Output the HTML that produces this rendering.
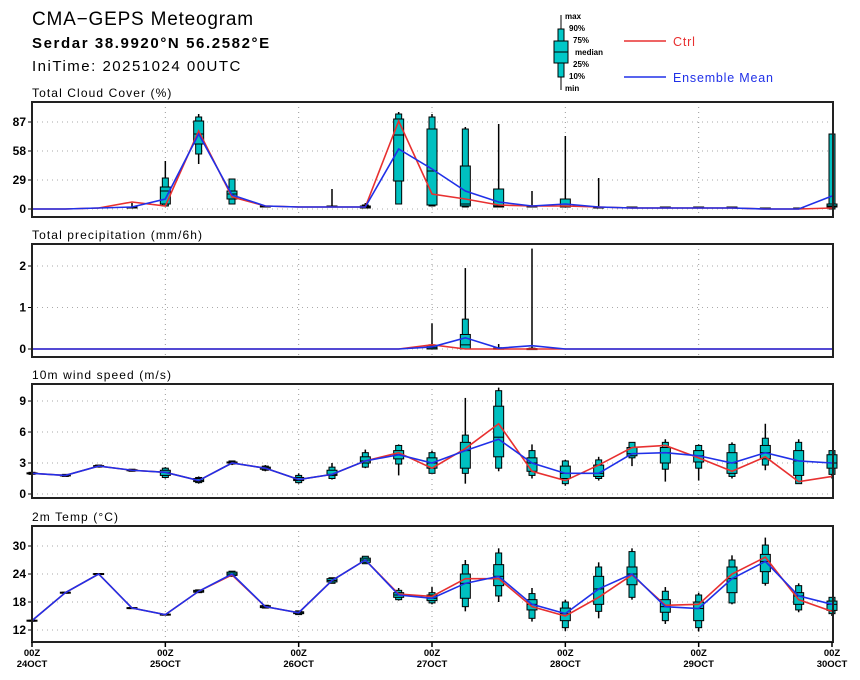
<!DOCTYPE html>
<html><head><meta charset="utf-8"><style>
body{margin:0;background:#fff;width:860px;height:680px;overflow:hidden}
svg{display:block}
text{font-family:"Liberation Sans",sans-serif}
</style></head><body>
<svg id="s" width="860" height="680" xmlns="http://www.w3.org/2000/svg">
<text x="32" y="25" font-size="19" letter-spacing="0.8">CMA−GEPS Meteogram</text>
<text x="32" y="48" font-size="15" font-weight="bold" letter-spacing="1.6">Serdar 38.9920°N 56.2582°E</text>
<text x="32" y="71" font-size="15" letter-spacing="1.5">IniTime: 20251024 00UTC</text>
<g font-size="8" font-weight="bold">
<line x1="561" y1="15" x2="561" y2="90" stroke="#000"/>
<rect x="558" y="29" width="6" height="48" fill="#00c8c8" stroke="#000"/>
<rect x="554" y="41" width="14" height="22" fill="#00c8c8" stroke="#000"/>
<line x1="554" y1="52" x2="568" y2="52" stroke="#000"/>
<text x="565" y="19">max</text><text x="569" y="31">90%</text><text x="573" y="43">75%</text>
<text x="575" y="55">median</text><text x="573" y="67">25%</text><text x="569" y="79">10%</text><text x="565" y="91">min</text>
</g>
<line x1="624" y1="41" x2="666" y2="41" stroke="#e83030" stroke-width="1.5"/>
<text x="673" y="46" font-size="12.5" fill="#e83030" letter-spacing="0.8">Ctrl</text>
<line x1="624" y1="77" x2="666" y2="77" stroke="#2030e8" stroke-width="1.5"/>
<text x="673" y="82" font-size="12.5" fill="#2030e8" letter-spacing="0.8">Ensemble Mean</text>
<g id="g"></g>
</svg>
<script>
var g=document.getElementById('g'),h='';
function X(i){return 32+i*800/24;}
function panel(o){
 var t=o.top,b=o.bot;
 h+='<text x="32" y="'+(t-5)+'" font-size="12" letter-spacing="1.1">'+o.title+'</text>';
 o.ticks.forEach(function(v){var y=o.Y(v);
  h+='<line x1="32" x2="833" y1="'+y+'" y2="'+y+'" stroke="#aaa" stroke-dasharray="1,4"/>';
  h+='<text x="26" y="'+(y+4)+'" font-size="12" font-weight="bold" text-anchor="end">'+v+'</text>';
  h+='<line x1="28" x2="32" y1="'+y+'" y2="'+y+'" stroke="#000"/>';});
 for(var d=1;d<6;d++){var x=X(d*4);h+='<line x1="'+x+'" x2="'+x+'" y1="'+t+'" y2="'+b+'" stroke="#999" stroke-dasharray="1,4"/>';}
 (o.box||[]).forEach(function(bx){var x=X(bx[0]),Y=o.Y;
  h+='<line x1="'+x+'" x2="'+x+'" y1="'+Y(bx[1])+'" y2="'+Y(bx[7])+'" stroke="#000" stroke-width="1.5"/>';
  h+='<rect x="'+(x-3)+'" y="'+Y(bx[6])+'" width="6" height="'+Math.max(1,Y(bx[2])-Y(bx[6]))+'" fill="#00c0c0" stroke="#000"/>';
  h+='<rect x="'+(x-5)+'" y="'+Y(bx[5])+'" width="10" height="'+Math.max(1,Y(bx[3])-Y(bx[5]))+'" fill="#00c0c0" stroke="#000"/>';
  h+='<line x1="'+(x-5)+'" x2="'+(x+5)+'" y1="'+Y(bx[4])+'" y2="'+Y(bx[4])+'" stroke="#000"/>';});
 function pl(a,c){h+='<polyline fill="none" stroke="'+c+'" stroke-width="1.6" points="'+a.map(function(v,i){return X(i)+','+o.Y(v)}).join(' ')+'"/>';}
 pl(o.ctl,'#e83030');pl(o.mean,'#2030e8');
 h+='<rect x="32" y="'+t+'" width="801" height="'+(b-t)+'" fill="none" stroke="#222" stroke-width="2"/>';
}
panel({title:'Total Cloud Cover (%)',top:102,bot:217,ticks:[87,58,29,0],Y:function(v){return 209-v;},
 mean:[0,0,1,2,10,75,14,3,2,2,2,60,40,18,7,3,5,2,1,1,1,1,0,0,13],
 ctl:[0,0,1,7,3,78,12,3,2,2,2,88,15,10,4,3,3,2,1,1,1,1,0,0,1],
 box:[[3,1,1,1,2,2,2,6],[4,3,3,5,18,22,31,48],[5,45,55,65,75,88,92,95],[6,5,5,10,15,18,30,30],[7,2,2,2,3,3,3,3],[9,2,2,2,2,3,3,20],[10,1,1,1,2,3,4,6],[11,5,5,28,74,90,95,97],[12,3,3,4,38,80,92,95],[13,2,2,3,5,43,80,82],[14,2,2,2,3,20,20,85],[15,2,2,2,2,3,3,18],[16,2,2,2,3,10,10,73],[17,1,1,1,2,2,2,31],[18,1,1,1,1,2,2,2],[19,1,1,1,1,2,2,2],[20,1,1,1,1,2,2,2],[21,1,1,1,1,2,2,2],[22,0,0,0,1,1,1,1],[23,0,0,0,1,1,1,1],[24,0,0,2,3,5,75,75]]});
panel({title:'Total precipitation (mm/6h)',top:244,bot:357,ticks:[2,1,0],Y:function(v){return 349-v*41.5;},
 mean:[0,0,0,0,0,0,0,0,0,0,0,0,0.05,0.27,0.02,0.08,0,0,0,0,0,0,0,0,0],
 ctl:[0,0,0,0,0,0,0,0,0,0,0,0,0.1,0,0,0,0,0,0,0,0,0,0,0,0],
 box:[[12,0,0,0,0.03,0.08,0.1,0.62],[13,0,0,0,0.1,0.35,0.72,1.95],[14,0,0,0,0,0.02,0.03,0.12],[15,0,0,0,0,0.01,0.02,2.42]]});
var wm=[2,1.8,2.7,2.3,2.1,1.3,3,2.5,1.4,1.9,3.2,3.8,3,4.2,5.3,3,2,2,3.9,4,3.7,3,4,3.2,3];
var wc=[2,1.8,2.7,2.3,2.1,1.3,3,2.5,1.4,1.9,3.2,4,2.5,4.4,6.8,2.2,1.3,2.8,4.5,4.7,3.5,2.2,3.6,1.2,1.7];
panel({title:'10m wind speed (m/s)',top:384,bot:498,ticks:[9,6,3,0],Y:function(v){return 494-v*10.33;},
 mean:wm,ctl:wc,box:[[0,1.9,1.9,1.95,2,2.05,2.1,2.1],[1,1.7,1.7,1.75,1.8,1.85,1.9,1.9],[2,2.6,2.6,2.65,2.7,2.75,2.8,2.8],[3,2.2,2.2,2.25,2.3,2.35,2.4,2.4],[4,1.5,1.6,1.8,2.1,2.3,2.5,2.6],[5,1,1.1,1.2,1.3,1.5,1.6,1.7],[6,2.8,2.9,3,3,3.1,3.2,3.2],[7,2.2,2.3,2.4,2.5,2.6,2.7,2.8],[8,1,1.1,1.3,1.4,1.6,1.8,2],[9,1.4,1.5,1.8,1.9,2.3,2.6,3],[10,2.5,2.6,3,3.2,3.6,4,4.3],[11,1.8,2.9,3.4,3.8,4.2,4.7,4.8],[12,2,2,2.5,3,3.5,4,4.2],[13,1,2,2.5,4.2,5,5.7,9.3],[14,2.2,2.5,3.6,5.5,8.5,10,10.3],[15,1.5,1.8,2.2,3,3.5,4.2,4.8],[16,0.8,1,1.5,2,2.7,3.2,3.3],[17,1.3,1.5,1.7,2,2.8,3.3,3.6],[18,2.7,3.5,3.7,3.9,4.5,5,5],[19,1.2,2.4,3,4,4.5,5,5.3],[20,1.3,2.5,3.1,3.7,4.2,4.7,4.8],[21,1.5,1.7,2,3,4,4.8,5],[22,2.3,2.8,3.4,4,4.7,5.4,6.8],[23,1,1,1.8,3.2,4.2,5,5.3],[24,1.5,1.9,2.5,3,3.8,4.2,4.2]]});
var tm=[14,20,24,16.7,15.3,20.3,24,17,15.7,22.6,27,19.5,18.8,22,23.5,17.5,15.5,20.8,24,17,16.6,23,26.7,19.3,17.5];
var tc=[14,20,24,16.7,15.3,20.3,23.8,17,15.7,22.6,27,19.7,19.2,23,23,17,15,19,23.8,17.3,17.5,24,27.6,18.5,16];
var tb=[[0,13.9,13.9,13.9,14,14.1,14.1,14.1],[1,19.9,19.9,19.9,20,20.1,20.1,20.1],[2,23.9,23.9,23.9,24,24.1,24.1,24.1],[3,16.6,16.6,16.6,16.7,16.8,16.8,16.8],[4,15.2,15.2,15.2,15.3,15.4,15.4,15.4],[5,20,20,20.1,20.3,20.5,20.6,20.6],[6,23.5,23.5,23.7,24,24.4,24.6,24.6],[7,16.7,16.7,16.8,17,17.2,17.3,17.3],[8,15.3,15.3,15.5,15.7,15.9,16.1,16.1],[9,22,22,22.3,22.6,23,23.2,23.2],[10,26.2,26.2,26.5,27,27.4,27.8,27.8],[11,18.3,18.5,19,19.5,20,20.5,21],[12,17.5,17.8,18.3,18.8,19.5,20,21.2],[13,16,17,18.8,22,24,26,27],[14,18,19.3,21.5,23.5,26,28.5,29.5],[15,13.8,14.5,16.3,17.5,18.5,19.8,21],[16,11.8,12.5,14,15.5,16.7,18,18.5],[17,14.5,16,17.5,20.8,23.5,25.5,26.5],[18,18.5,19,21.7,24,25.5,28.8,29.5],[19,13.3,14,15.8,17,18.5,20.3,21.2],[20,11.7,12.5,14,16.6,18,19.5,20],[21,17.5,17.8,20,23,25.5,27,28],[22,21.5,22,24.5,26.7,28.2,30.2,31.8],[23,15.8,16.3,17.5,19.3,20,21.5,22],[24,15,15.5,16.2,17.5,18.2,19,19]];
panel({title:'2m Temp (°C)',top:526,bot:642,ticks:[30,24,18,12],Y:function(v){return 630-(v-12)*4.667;},mean:tm,ctl:tc,box:tb});
var days=['24OCT','25OCT','26OCT','27OCT','28OCT','29OCT','30OCT'];
for(var d=0;d<7;d++){var x=X(d*4);
 h+='<line x1="'+x+'" x2="'+x+'" y1="642" y2="647" stroke="#000" stroke-width="1.5"/>';
 h+='<text x="'+x+'" y="656" font-size="9.5" font-weight="bold" text-anchor="middle">00Z</text>';
 h+='<text x="'+x+'" y="667" font-size="9.5" font-weight="bold" text-anchor="middle">'+days[d]+'</text>';}
g.innerHTML=h;
</script>
</body></html>
